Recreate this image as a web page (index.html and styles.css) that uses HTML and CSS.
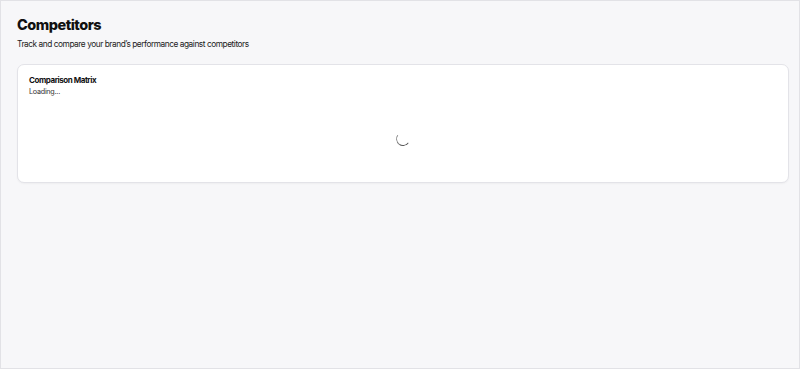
FILE: index.html
```html
<!DOCTYPE html>
<html>
<head>
    <title>Competitors</title>
    <link rel="stylesheet" href="styles.css">
</head>
<body>
<div class="frame">
    <div class="page-head">
        <h1 class="page-title">Competitors</h1>
        <p class="page-sub">Track and compare your brand’s performance against competitors</p>
    </div>

    <div class="card">
        <div class="card-title">Comparison Matrix</div>
        <div class="card-desc">Loading...</div>
        <div class="card-body">
            <span class="spinner"></span>
        </div>
    </div>
</div>
</body>
</html>
```

FILE: styles.css
```css
html, body {
    margin: 0;
    padding: 0;
    height: 100%;
}

body {
    font-family: Inter, "Noto Sans", sans-serif;
    color: #111;
    background: #ffffff;
}

.frame {
    box-sizing: border-box;
    height: 369px;
    border: 1px solid #e2e2e6;
    background-color: #f7f7f9;
    padding: 14px 10px 0 16px;
}

/* encabezado */
.page-title {
    margin: 0;
    font-size: 14.5px;
    font-weight: 800;
    letter-spacing: -0.5px;
    line-height: 20px;
}

.page-sub {
    margin: 3px 0 0 0;
    font-size: 8.3px;
    letter-spacing: -0.45px;
    line-height: 12px;
    color: #222;
}

/* tarjeta */
.card {
    margin-top: 14px;
    background-color: #fff;
    border: 1px solid #e3e3e8;
    border-radius: 7px;
    box-shadow: 0 1px 2px rgba(0, 0, 0, 0.04);
    padding: 10px 11px 0 11px;
    height: 107px;
}

.card-title {
    font-size: 8px;
    font-weight: 700;
    letter-spacing: -0.45px;
    line-height: 11px;
}

.card-desc {
    font-size: 7.2px;
    letter-spacing: -0.25px;
    line-height: 11px;
    color: #333;
}

.card-body {
    display: flex;
    justify-content: center;
    padding-top: 35px;
}

.spinner {
    display: block;
    width: 12px;
    height: 12px;
    border-radius: 50%;
    border: 1.5px solid transparent;
    border-bottom-color: #555;
    border-left-color: #888;
    transform: rotate(-10deg);
}
```
